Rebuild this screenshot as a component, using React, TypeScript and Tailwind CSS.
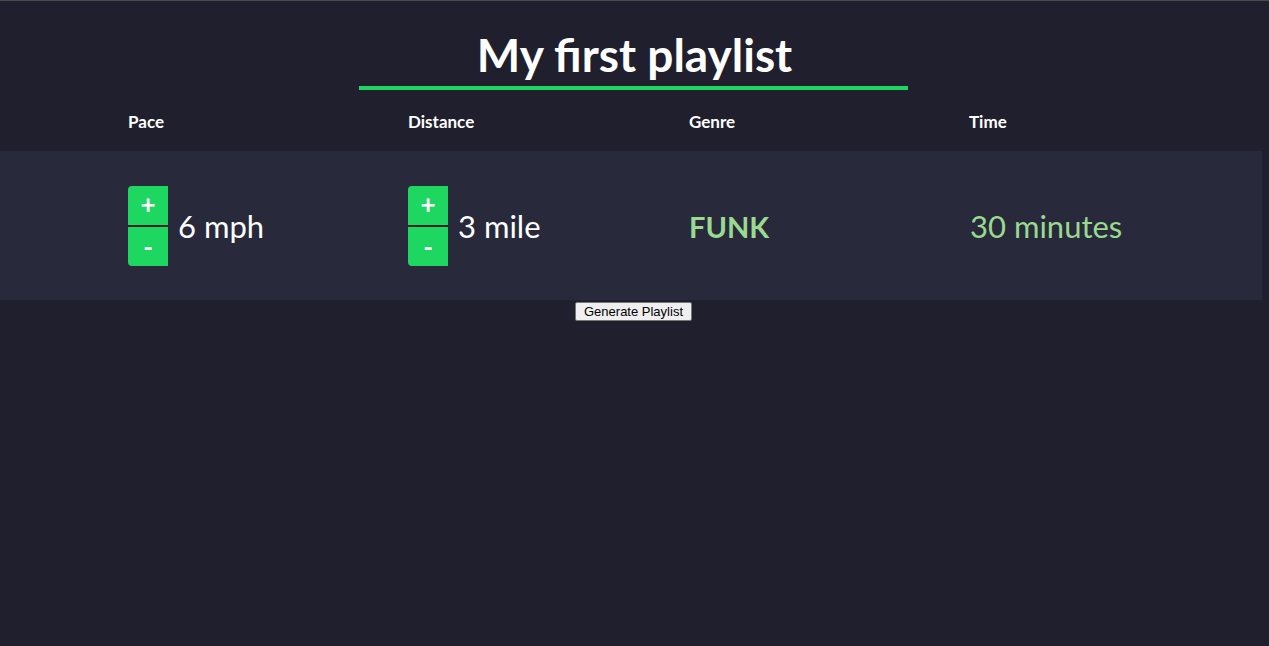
import React from 'react'

const columns = ['Pace', 'Distance', 'Genre', 'Time']

const Stepper = ({ value }: { value: string }) => {
  return (
    <div className="flex items-center">
      <div className="flex flex-col w-[40px] h-[80px] rounded-l-[4px] overflow-hidden bg-[#20202d] gap-[2px]">
        <button className="flex-1 bg-[#1ed760] text-white text-[26px] leading-none font-bold flex items-center justify-center pb-[2px]">
          +
        </button>
        <button className="flex-1 bg-[#1ed760] text-white text-[26px] leading-none font-bold flex items-center justify-center pt-[2px]">
          -
        </button>
      </div>
      <span className="ml-[10px] mt-[2px] text-white text-[31px]">{value}</span>
    </div>
  )
}

export default function App() {
  return (
    <div
      className="min-h-[646px] bg-[#1f1f2d] border-t border-[#4b4b4b]"
      style={{ fontFamily: 'Lato, "Open Sans", sans-serif' }}
    >
      <div className="flex flex-col items-center pt-[24px]">
        <h1 className="text-white text-[46px] font-bold leading-[60px]">My first playlist</h1>
        <div className="w-[549px] h-[4px] bg-[#1ed760] mt-[1px] mr-[2px]" />
      </div>
      <div className="grid grid-cols-[280px_281px_280px_281px] ml-[128px] h-[61px] items-center">
        {columns.map((c) => (
          <div key={c} className="text-white font-bold text-[17px] pt-[2px]">
            {c}
          </div>
        ))}
      </div>
      <div className="bg-[#28293b] h-[149px] mr-[7px]">
        <div className="grid grid-cols-[280px_281px_280px_281px] ml-[128px] h-full items-center">
          <Stepper value="6 mph" />
          <Stepper value="3 mile" />
          <div className="text-[#9ad98f] text-[29px] font-bold pt-[2px]">FUNK</div>
          <div className="text-[#9ad98f] text-[31px] pl-[1px] pt-[2px]">30 minutes</div>
        </div>
      </div>
      <div className="flex justify-center pt-[2px] pr-[2px]">
        <button
          className="bg-[#efefef] border border-[#767676] rounded-[2px] px-[8px] h-[19px] text-[13px] leading-none text-black"
          style={{ fontFamily: '"Liberation Sans", Arial, sans-serif' }}
        >
          Generate Playlist
        </button>
      </div>
    </div>
  )
}
